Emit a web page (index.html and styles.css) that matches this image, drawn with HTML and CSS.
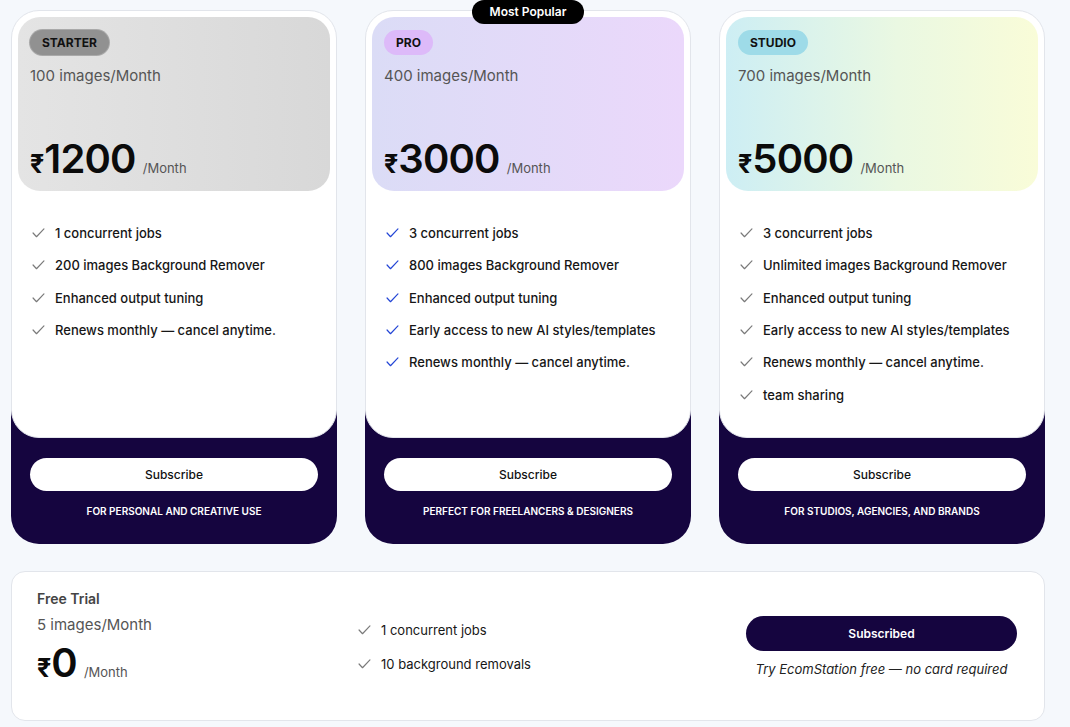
FILE: index.html
```html
<!DOCTYPE html>
<html lang="en">
<head>
    <meta charset="UTF-8">
    <meta name="viewport" content="width=device-width, initial-scale=1.0">
    <title>Pricing</title>
    <link rel="stylesheet" href="styles.css">
</head>
<body>
    <svg class="sprite" xmlns="http://www.w3.org/2000/svg">
        <symbol id="check" viewBox="0 0 14 11">
            <path d="M1 5.5 L4.8 9.6 L13 1" fill="none" stroke="currentColor" stroke-width="1.3" stroke-linecap="round" stroke-linejoin="round"/>
        </symbol>
    </svg>

    <div class="page">
        <div class="plans">
            <!-- Starter -->
            <div class="plan plan-starter">
                <div class="plan-body">
                    <div class="plan-head">
                        <span class="tier">Starter</span>
                        <p class="quota">100 images/Month</p>
                        <div class="price"><span class="rupee">₹</span><span class="amount">1200</span><span class="per">/Month</span></div>
                    </div>
                    <ul class="features">
                        <li><svg class="check"><use href="#check"/></svg>1 concurrent jobs</li>
                        <li><svg class="check"><use href="#check"/></svg>200 images Background Remover</li>
                        <li><svg class="check"><use href="#check"/></svg>Enhanced output tuning</li>
                        <li><svg class="check"><use href="#check"/></svg>Renews monthly — cancel anytime.</li>
                    </ul>
                </div>
                <div class="plan-foot">
                    <button class="subscribe">Subscribe</button>
                    <p class="audience">For personal and creative use</p>
                </div>
            </div>

            <!-- Pro -->
            <div class="plan plan-pro">
                <span class="popular">Most Popular</span>
                <div class="plan-body">
                    <div class="plan-head">
                        <span class="tier">Pro</span>
                        <p class="quota">400 images/Month</p>
                        <div class="price"><span class="rupee">₹</span><span class="amount">3000</span><span class="per">/Month</span></div>
                    </div>
                    <ul class="features">
                        <li><svg class="check"><use href="#check"/></svg>3 concurrent jobs</li>
                        <li><svg class="check"><use href="#check"/></svg>800 images Background Remover</li>
                        <li><svg class="check"><use href="#check"/></svg>Enhanced output tuning</li>
                        <li><svg class="check"><use href="#check"/></svg>Early access to new AI styles/templates</li>
                        <li><svg class="check"><use href="#check"/></svg>Renews monthly — cancel anytime.</li>
                    </ul>
                </div>
                <div class="plan-foot">
                    <button class="subscribe">Subscribe</button>
                    <p class="audience">Perfect for freelancers &amp; designers</p>
                </div>
            </div>

            <!-- Studio -->
            <div class="plan plan-studio">
                <div class="plan-body">
                    <div class="plan-head">
                        <span class="tier">Studio</span>
                        <p class="quota">700 images/Month</p>
                        <div class="price"><span class="rupee">₹</span><span class="amount">5000</span><span class="per">/Month</span></div>
                    </div>
                    <ul class="features">
                        <li><svg class="check"><use href="#check"/></svg>3 concurrent jobs</li>
                        <li><svg class="check"><use href="#check"/></svg>Unlimited images Background Remover</li>
                        <li><svg class="check"><use href="#check"/></svg>Enhanced output tuning</li>
                        <li><svg class="check"><use href="#check"/></svg>Early access to new AI styles/templates</li>
                        <li><svg class="check"><use href="#check"/></svg>Renews monthly — cancel anytime.</li>
                        <li><svg class="check"><use href="#check"/></svg>team sharing</li>
                    </ul>
                </div>
                <div class="plan-foot">
                    <button class="subscribe">Subscribe</button>
                    <p class="audience">For studios, agencies, and brands</p>
                </div>
            </div>
        </div>

        <div class="trial">
            <div class="trial-info">
                <h3>Free Trial</h3>
                <p class="quota">5 images/Month</p>
                <div class="price"><span class="rupee">₹</span><span class="amount">0</span><span class="per">/Month</span></div>
            </div>
            <ul class="features trial-features">
                <li><svg class="check"><use href="#check"/></svg>1 concurrent jobs</li>
                <li><svg class="check"><use href="#check"/></svg>10 background removals</li>
            </ul>
            <div class="trial-action">
                <button class="subscribed">Subscribed</button>
                <p class="trial-note">Try EcomStation free — no card required</p>
            </div>
        </div>
    </div>
</body>
</html>
```

FILE: styles.css
```css
body {
    font-family: Inter, 'Noto Sans', sans-serif;
    margin: 0;
    padding: 0;
    background-color: #f5f8fc;
    color: #1a1a1a;
}
p, h3, ul {
    margin: 0;
    padding: 0;
}
.sprite {
    display: none;
}
.page {
    width: 1034px;
    padding: 10px 0 0 11px;
}
.plans {
    display: grid;
    grid-template-columns: repeat(3, 1fr);
    column-gap: 28px;
}
.plan {
    position: relative;
    display: flex;
    flex-direction: column;
    border-radius: 0 0 28px 28px;
    background: linear-gradient(to bottom, transparent 50%, #15053f 50%);
}
.plan-body {
    flex: 1;
    background-color: #fff;
    border: 1px solid #e2e5eb;
    border-radius: 28px;
    padding: 6px 6px 26px;
}
.plan-head {
    height: 174px;
    box-sizing: border-box;
    border-radius: 22px;
    padding: 13px 12px 12px;
    display: flex;
    flex-direction: column;
    align-items: flex-start;
}
.plan-starter .plan-head {
    background: linear-gradient(to right, #e4e4e4, #d8d8d8);
}
.plan-pro .plan-head {
    background: linear-gradient(to right, #dbdcf6, #ebd8fb);
}
.plan-studio .plan-head {
    background: linear-gradient(to right, #cdeef4, #eaf8e2 55%, #f9fcd8);
}
.tier {
    display: inline-block;
    height: 25px;
    line-height: 25px;
    padding: 0 12px;
    border-radius: 13px;
    font-size: 12px;
    font-weight: 700;
    text-transform: uppercase;
    color: #111;
}
.plan-starter .tier {
    background-color: #919191;
    box-shadow: 0 0 0 1px #a9a9a9;
}
.plan-pro .tier {
    background-color: #ddbaf9;
}
.plan-studio .tier {
    background-color: #9edbe8;
}
.quota {
    font-size: 15px;
    line-height: 20px;
    color: #555;
    margin-top: 11px;
}
.price {
    display: flex;
    align-items: baseline;
    margin-top: auto;
    line-height: 1;
    color: #0b0b0b;
}
.rupee {
    font-size: 25px;
    font-weight: 700;
}
.amount {
    font-size: 40px;
    font-weight: 600;
    letter-spacing: -0.8px;
}
.per {
    font-size: 13px;
    color: #555;
    margin-left: 7px;
}
.features {
    list-style: none;
    margin: 26px 0 0 14px;
}
.features li {
    display: flex;
    align-items: center;
    height: 32.3px;
    font-size: 13px;
    font-weight: 500;
    color: #161616;
}
.check {
    width: 13px;
    height: 10px;
    margin-right: 10px;
    flex-shrink: 0;
    color: #7a7a7a;
}
.plan-pro .check {
    color: #2446d6;
}
.plan-foot {
    padding: 20px 19px 26px;
    text-align: center;
}
.subscribe {
    display: block;
    width: 100%;
    height: 33px;
    border: none;
    border-radius: 17px;
    background-color: #fff;
    font-family: inherit;
    font-size: 12px;
    font-weight: 500;
    color: #111;
}
.audience {
    margin-top: 13px;
    font-size: 10px;
    line-height: 14px;
    font-weight: 600;
    text-transform: uppercase;
    color: #fff;
}
.popular {
    position: absolute;
    top: -10px;
    left: 50%;
    transform: translateX(-50%);
    z-index: 1;
    width: 112px;
    height: 24px;
    line-height: 24px;
    border-radius: 12px;
    background-color: #000;
    color: #fff;
    font-size: 12px;
    font-weight: 600;
    text-align: center;
}
.trial {
    margin-top: 27px;
    background-color: #fff;
    border: 1px solid #e2e5eb;
    border-radius: 14px;
    padding: 17px 27px 37px 25px;
    display: grid;
    grid-template-columns: 321px 1fr 271px;
    align-items: start;
}
.trial-info h3 {
    font-size: 14px;
    line-height: 20px;
    font-weight: 600;
    color: #444;
}
.trial-info .quota {
    margin-top: 6px;
}
.trial-info .price {
    margin-top: 8px;
}
.trial-features {
    margin: 24px 0 0;
}
.trial-features li {
    height: 34px;
    font-weight: 400;
}
.trial-action {
    text-align: center;
    margin-top: 27px;
}
.subscribed {
    display: block;
    width: 100%;
    height: 35px;
    border: none;
    border-radius: 18px;
    background-color: #15053f;
    color: #fff;
    font-family: inherit;
    font-size: 12px;
    font-weight: 600;
}
.trial-note {
    margin-top: 10px;
    font-size: 13px;
    line-height: 16px;
    font-style: italic;
    color: #222;
}
```
